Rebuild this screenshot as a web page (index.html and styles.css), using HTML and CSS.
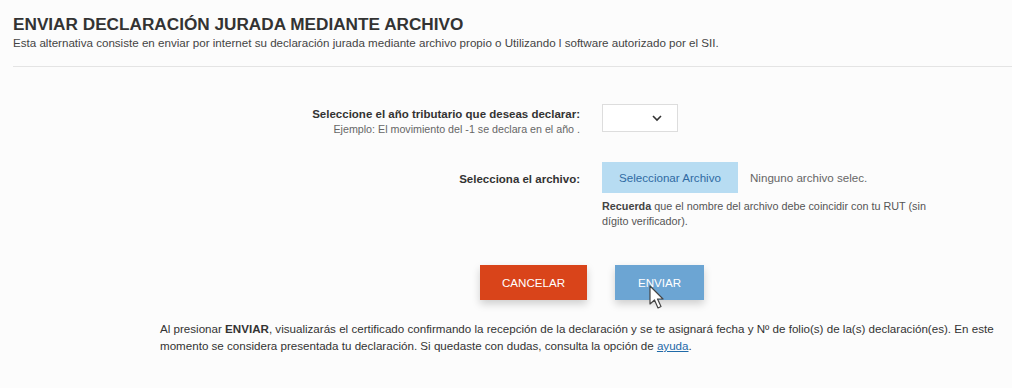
FILE: index.html
```html
<!DOCTYPE html>
<html lang="es">
<head>
    <meta charset="UTF-8">
    <meta name="viewport" content="width=device-width, initial-scale=1.0">
    <title>Enviar declaración jurada mediante archivo</title>
    <link rel="stylesheet" href="styles.css">
</head>
<body>
    <div class="page">
        <h1 class="title">ENVIAR DECLARACIÓN JURADA MEDIANTE ARCHIVO</h1>
        <p class="subtitle">Esta alternativa consiste en enviar por internet su declaración jurada mediante archivo propio o Utilizando l software autorizado por el SII.</p>
        <hr class="divider">

        <!-- Formulario -->
        <div class="form">
            <div class="row row-year">
                <div class="label">
                    <div class="label-main">Seleccione el año tributario que deseas declarar:</div>
                    <div class="label-hint">Ejemplo: El movimiento del -1 se declara en el año .</div>
                </div>
                <div class="control">
                    <div class="select">
                        <svg width="12" height="8" viewBox="0 0 12 8"><path d="M2 2 L6 6 L10 2" fill="none" stroke="#333" stroke-width="1.6"/></svg>
                    </div>
                </div>
            </div>

            <div class="row row-file">
                <div class="label">
                    <div class="label-main">Selecciona el archivo:</div>
                </div>
                <div class="control">
                    <div class="file-line">
                        <button class="file-btn">Seleccionar Archivo</button>
                        <span class="file-name">Ninguno archivo selec.</span>
                    </div>
                    <p class="file-note"><b>Recuerda</b> que el nombre del archivo debe coincidir con tu RUT (sin dígito verificador).</p>
                </div>
            </div>
        </div>

        <!-- Botones -->
        <div class="actions">
            <button class="btn btn-cancel">CANCELAR</button>
            <button class="btn btn-send">ENVIAR
                <svg class="cursor" width="20" height="26" viewBox="0 0 20 26">
                    <path d="M1 1 L1 19 L5.5 15 L9 23 L12 21.5 L8.5 14 L14 14 Z" fill="#fff" stroke="#444" stroke-width="1.2" stroke-linejoin="round"/>
                </svg>
            </button>
        </div>

        <p class="footer-note">Al presionar <b>ENVIAR</b>, visualizarás el certificado confirmando la recepción de la declaración y se te asignará fecha y Nº de folio(s) de la(s) declaración(es). En este momento se considera presentada tu declaración. Si quedaste con dudas, consulta la opción de <a href="#">ayuda</a>.</p>
    </div>
</body>
</html>
```

FILE: styles.css
```css
body {
    margin: 0;
    font-family: "Liberation Sans", Arial, sans-serif;
    background-color: #fcfcfc;
    color: #333;
}
.page {
    padding: 13px 0 0 13px;
}
.title {
    margin: 0;
    font-size: 17.2px;
    line-height: 22px;
    font-weight: bold;
    color: #333;
}
.subtitle {
    margin: 0;
    font-size: 11.6px;
    line-height: 15px;
    color: #444;
}
.divider {
    margin: 16px 0 0 0;
    border: none;
    border-top: 1px solid #e4e4e4;
}
.form {
    margin-top: 40px;
}
.row {
    display: grid;
    grid-template-columns: 567px auto;
    column-gap: 22px;
}
.label {
    text-align: right;
}
.label-main {
    font-size: 11.5px;
    line-height: 15px;
    font-weight: bold;
    color: #333;
}
.label-hint {
    font-size: 10.7px;
    line-height: 14px;
    color: #666;
}
.select {
    width: 76px;
    height: 28px;
    margin-top: -3px;
    border: 1px solid #ddd;
    background-color: #fff;
    display: flex;
    align-items: center;
    justify-content: flex-end;
    padding-right: 14px;
    box-sizing: border-box;
}
.row-file {
    margin-top: 26px;
}
.row-file .label {
    padding-top: 10px;
}
.file-line {
    display: flex;
    align-items: center;
    gap: 12px;
}
.file-btn {
    width: 136px;
    height: 31px;
    border: none;
    background-color: #b7dcf2;
    color: #2f6aa3;
    font-family: inherit;
    font-size: 11.6px;
    padding: 0;
}
.file-name {
    font-size: 11.6px;
    color: #666;
}
.file-note {
    margin: 6px 0 0 0;
    width: 345px;
    font-size: 10.8px;
    line-height: 15px;
    color: #555;
}
.file-note b {
    color: #444;
}
.actions {
    display: flex;
    gap: 28px;
    margin-top: 36px;
    padding-left: 467px;
}
.btn {
    height: 35px;
    border: none;
    color: #fff;
    font-family: inherit;
    font-size: 11.6px;
    box-shadow: 0 4px 8px rgba(0, 0, 0, 0.18);
    padding: 0;
}
.btn-cancel {
    width: 107px;
    background-color: #d9441a;
}
.btn-send {
    width: 89px;
    background-color: #6ca5d3;
    position: relative;
}
.cursor {
    position: absolute;
    left: 34px;
    top: 20px;
}
.footer-note {
    margin: 20px 0 0 147px;
    padding-right: 2px;
    font-size: 11.6px;
    line-height: 17px;
    color: #333;
}
.footer-note a {
    color: #1f6aa8;
}
```
